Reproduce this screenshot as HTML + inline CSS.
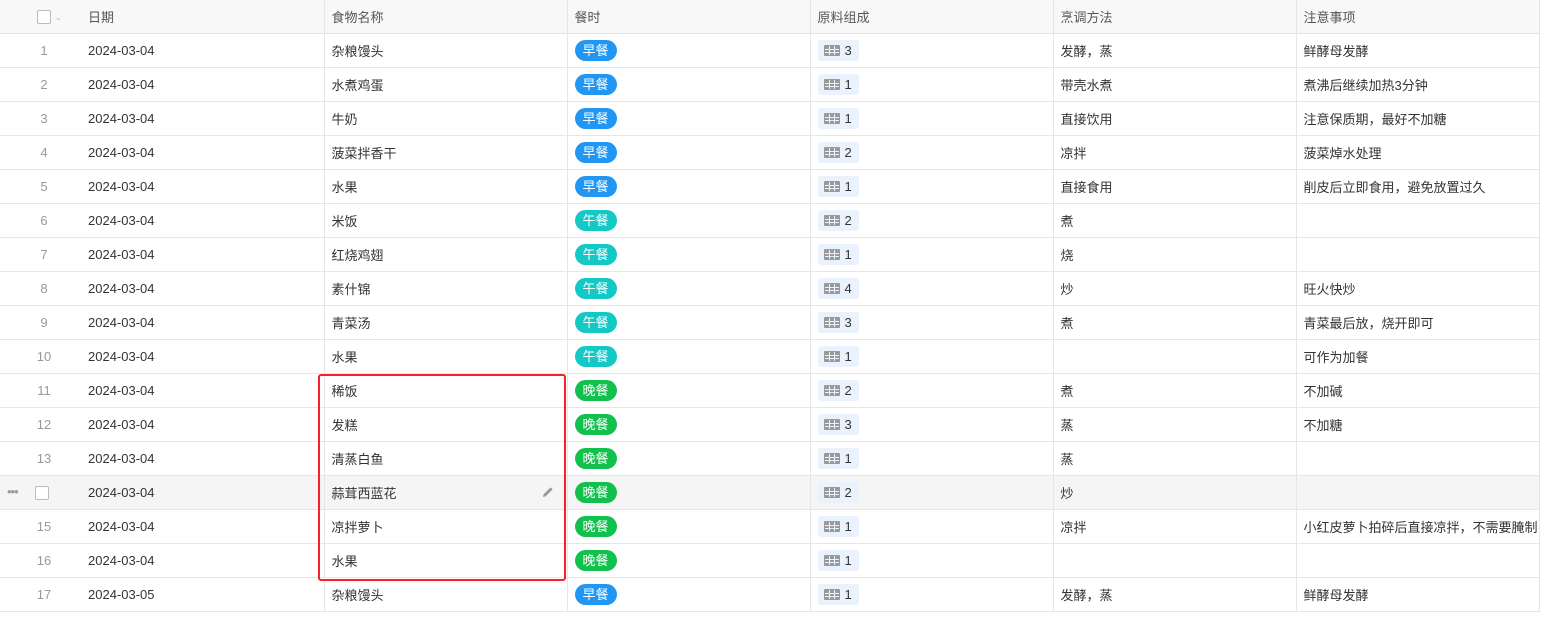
<!DOCTYPE html>
<html><head><meta charset="utf-8"><style>
*{margin:0;padding:0;box-sizing:border-box}
body{width:1564px;height:641px;background:#fff;font-family:"Liberation Sans","Noto Sans CJK SC",sans-serif;font-size:13px;color:#333;overflow:hidden;position:relative}
table{position:absolute;left:0;top:0;border-collapse:collapse;table-layout:fixed;width:1539px}
td,th{height:34px;border-bottom:1px solid #e6e6e6;white-space:nowrap;overflow:hidden;padding:0 0 0 7px;text-align:left;font-weight:normal;vertical-align:middle}
th{height:33px;background:#f8f8f8;color:#555;border-bottom:1px solid #e3e3e3}
td.c,th.c{border-right:1px solid #e6e6e6}
td.n{text-align:center;color:#999;padding:0 0 0 10px}
td.d,th.d{padding-left:10px}
tr.h td{background:#f5f5f5}
.tag{display:inline-block;width:42px;height:21px;line-height:21px;border-radius:11px;color:#fff;text-align:center;font-size:13px}
.b{background:#2196f3}.t{background:#14c8c6}.g{background:#12c04e}
.chip{display:inline-block;height:21px;line-height:21px;padding:0 7px 0 6px;background:#eaf2fd;border-radius:3px;color:#333}
.ic{display:inline-block;width:16px;height:11px;vertical-align:-1px;margin-right:5px;background:#999;border-radius:1px;position:relative}
.ic:before{content:"";position:absolute;left:1px;right:1px;top:4px;height:1px;background:#eaf2fd;box-shadow:0 3px 0 #eaf2fd}
.ic:after{content:"";position:absolute;top:1px;bottom:1px;left:5px;width:1px;background:#eaf2fd;box-shadow:5px 0 0 #eaf2fd}
.cb{display:inline-block;width:14px;height:14px;border:1px solid #bbb;border-radius:2px;background:#fff;vertical-align:middle}
.red{position:absolute;left:318px;top:374px;width:248px;height:207px;border:2px solid #f5222d;border-radius:3px}
</style></head><body>
<table>
<colgroup><col style="width:78px"><col style="width:246px"><col style="width:243px"><col style="width:243px"><col style="width:243px"><col style="width:243px"><col style="width:243px"></colgroup>
<tr><th style="padding-left:37px"><span class="cb"></span> <span style="color:#bbb;font-size:9px">&#8964;</span></th><th class="d c">日期</th><th class="c">食物名称</th><th class="c">餐时</th><th class="c">原料组成</th><th class="c">烹调方法</th><th class="c">注意事项</th></tr>
<tr><td class="n">1</td><td class="d c">2024-03-04</td><td class="c">杂粮馒头</td><td class="c"><span class="tag b">早餐</span></td><td class="c"><span class="chip"><span class="ic"></span>3</span></td><td class="c">发酵，蒸</td><td class="c">鲜酵母发酵</td></tr>
<tr><td class="n">2</td><td class="d c">2024-03-04</td><td class="c">水煮鸡蛋</td><td class="c"><span class="tag b">早餐</span></td><td class="c"><span class="chip"><span class="ic"></span>1</span></td><td class="c">带壳水煮</td><td class="c">煮沸后继续加热3分钟</td></tr>
<tr><td class="n">3</td><td class="d c">2024-03-04</td><td class="c">牛奶</td><td class="c"><span class="tag b">早餐</span></td><td class="c"><span class="chip"><span class="ic"></span>1</span></td><td class="c">直接饮用</td><td class="c">注意保质期，最好不加糖</td></tr>
<tr><td class="n">4</td><td class="d c">2024-03-04</td><td class="c">菠菜拌香干</td><td class="c"><span class="tag b">早餐</span></td><td class="c"><span class="chip"><span class="ic"></span>2</span></td><td class="c">凉拌</td><td class="c">菠菜焯水处理</td></tr>
<tr><td class="n">5</td><td class="d c">2024-03-04</td><td class="c">水果</td><td class="c"><span class="tag b">早餐</span></td><td class="c"><span class="chip"><span class="ic"></span>1</span></td><td class="c">直接食用</td><td class="c">削皮后立即食用，避免放置过久</td></tr>
<tr><td class="n">6</td><td class="d c">2024-03-04</td><td class="c">米饭</td><td class="c"><span class="tag t">午餐</span></td><td class="c"><span class="chip"><span class="ic"></span>2</span></td><td class="c">煮</td><td class="c"></td></tr>
<tr><td class="n">7</td><td class="d c">2024-03-04</td><td class="c">红烧鸡翅</td><td class="c"><span class="tag t">午餐</span></td><td class="c"><span class="chip"><span class="ic"></span>1</span></td><td class="c">烧</td><td class="c"></td></tr>
<tr><td class="n">8</td><td class="d c">2024-03-04</td><td class="c">素什锦</td><td class="c"><span class="tag t">午餐</span></td><td class="c"><span class="chip"><span class="ic"></span>4</span></td><td class="c">炒</td><td class="c">旺火快炒</td></tr>
<tr><td class="n">9</td><td class="d c">2024-03-04</td><td class="c">青菜汤</td><td class="c"><span class="tag t">午餐</span></td><td class="c"><span class="chip"><span class="ic"></span>3</span></td><td class="c">煮</td><td class="c">青菜最后放，烧开即可</td></tr>
<tr><td class="n">10</td><td class="d c">2024-03-04</td><td class="c">水果</td><td class="c"><span class="tag t">午餐</span></td><td class="c"><span class="chip"><span class="ic"></span>1</span></td><td class="c"></td><td class="c">可作为加餐</td></tr>
<tr><td class="n">11</td><td class="d c">2024-03-04</td><td class="c">稀饭</td><td class="c"><span class="tag g">晚餐</span></td><td class="c"><span class="chip"><span class="ic"></span>2</span></td><td class="c">煮</td><td class="c">不加碱</td></tr>
<tr><td class="n">12</td><td class="d c">2024-03-04</td><td class="c">发糕</td><td class="c"><span class="tag g">晚餐</span></td><td class="c"><span class="chip"><span class="ic"></span>3</span></td><td class="c">蒸</td><td class="c">不加糖</td></tr>
<tr><td class="n">13</td><td class="d c">2024-03-04</td><td class="c">清蒸白鱼</td><td class="c"><span class="tag g">晚餐</span></td><td class="c"><span class="chip"><span class="ic"></span>1</span></td><td class="c">蒸</td><td class="c"></td></tr>
<tr class="h"><td style="padding-left:7px;text-align:left"><span style="color:#999;letter-spacing:-1px">•••</span><span class="cb" style="margin-left:17px"></span></td><td class="d c">2024-03-04</td><td class="c" style="position:relative">蒜茸西蓝花<svg style="position:absolute;left:217px;top:10px" width="12" height="12" viewBox="0 0 12 12"><path d="M1 11l0.6-2.6L8.6 1.4l2 2L3.6 10.4z" fill="#999"/></svg></td><td class="c"><span class="tag g">晚餐</span></td><td class="c"><span class="chip"><span class="ic"></span>2</span></td><td class="c">炒</td><td class="c"></td></tr>
<tr><td class="n">15</td><td class="d c">2024-03-04</td><td class="c">凉拌萝卜</td><td class="c"><span class="tag g">晚餐</span></td><td class="c"><span class="chip"><span class="ic"></span>1</span></td><td class="c">凉拌</td><td class="c" style="text-overflow:clip">小红皮萝卜拍碎后直接凉拌，不需要腌制</td></tr>
<tr><td class="n">16</td><td class="d c">2024-03-04</td><td class="c">水果</td><td class="c"><span class="tag g">晚餐</span></td><td class="c"><span class="chip"><span class="ic"></span>1</span></td><td class="c"></td><td class="c"></td></tr>
<tr><td class="n">17</td><td class="d c">2024-03-05</td><td class="c">杂粮馒头</td><td class="c"><span class="tag b">早餐</span></td><td class="c"><span class="chip"><span class="ic"></span>1</span></td><td class="c">发酵，蒸</td><td class="c">鲜酵母发酵</td></tr>
</table>
<div class="red"></div>
</body></html>
